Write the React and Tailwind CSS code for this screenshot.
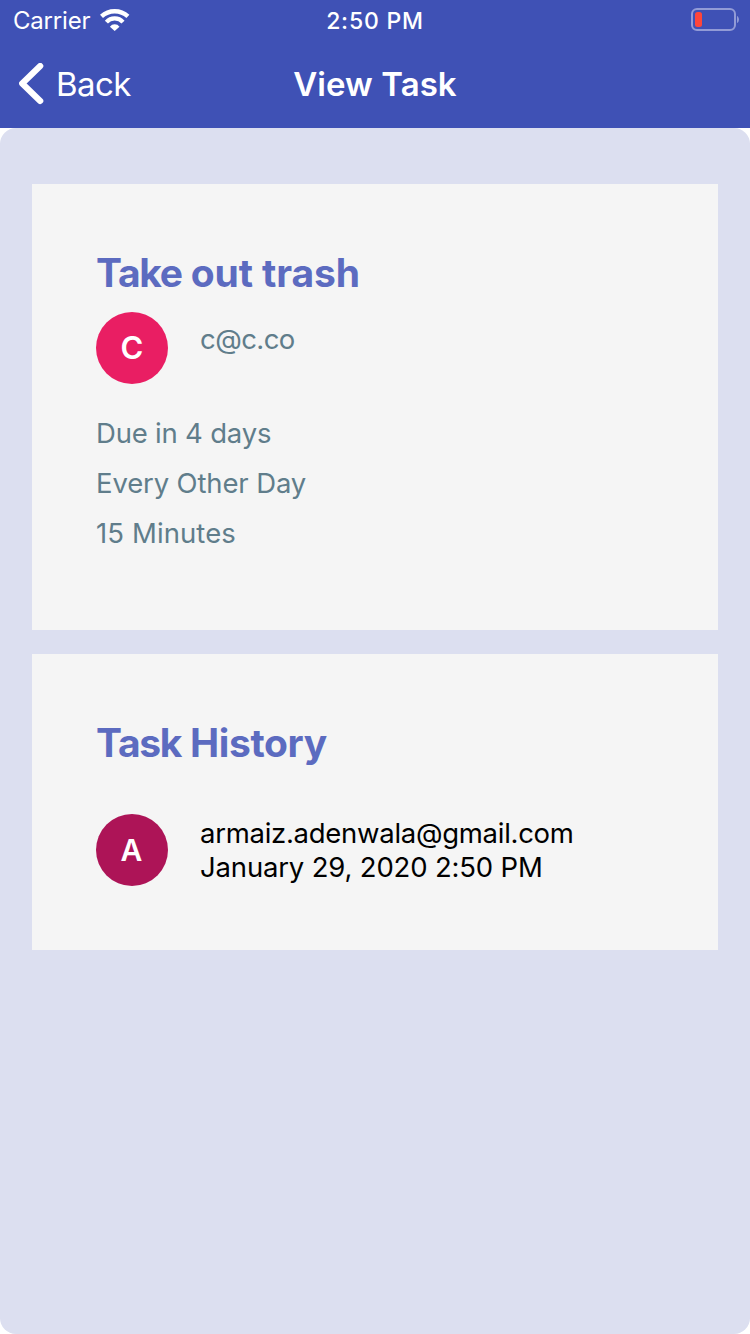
function WifiIcon() {
  return (
    <svg className="ml-[10px] mt-[9px] h-[22px] w-[30px] shrink-0" viewBox="0 0 30 22" fill="none">
      <path d="M1.5 7.4 A19.4 19.4 0 0 1 27.9 7.4" stroke="#fff" strokeWidth="4.4" />
      <path d="M6.4 13.1 A11.2 11.2 0 0 1 23 13.1" stroke="#fff" strokeWidth="4.2" />
      <path d="M9.9 17.8 A5.9 5.9 0 0 1 19.5 17.8 L14.7 22 Z" fill="#fff" />
    </svg>
  );
}

function BatteryIcon() {
  return (
    <svg className="mt-[8px] h-[23px] w-[48px]" viewBox="0 0 48 23" fill="none">
      <rect x="1" y="1" width="43" height="21" rx="5" stroke="#929bd6" strokeWidth="2" />
      <rect x="4" y="4" width="7" height="15" rx="2.5" fill="#ff453a" />
      <path d="M46 8 C48.6 9 48.6 14 46 15 Z" fill="#929bd6" />
    </svg>
  );
}

function StatusBar() {
  return (
    <div className="grid h-10 grid-cols-3">
      <div className="flex pl-[13px]">
        <span className="text-[24px] leading-[42px] tracking-[-0.2px]">Carrier</span>
        <WifiIcon />
      </div>
      <div className="text-center text-[23px] leading-[42px] font-medium tracking-[0.8px]">2:50 PM</div>
      <div className="flex justify-end pr-[11px]">
        <BatteryIcon />
      </div>
    </div>
  );
}

function NavBar() {
  return (
    <div className="grid h-[88px] grid-cols-3">
      <div className="flex pl-[19px]">
        <svg className="mt-[23px] h-[42px] w-[25px] shrink-0" viewBox="0 0 25 42" fill="none">
          <path d="M21.2 3.1 L3.2 20.5 L21.2 37.9" stroke="#fff" strokeWidth="6.2" strokeLinecap="round" strokeLinejoin="round" />
        </svg>
        <span className="ml-[12px] text-[33px] leading-[88px] tracking-[-0.6px]">Back</span>
      </div>
      <div className="text-center text-[33px] leading-[88px] font-semibold tracking-[0.05px] whitespace-nowrap">View Task</div>
    </div>
  );
}

export default function App() {
  return (
    <div className="flex h-[1334px] w-[750px] flex-col bg-white font-['Inter',sans-serif]">
      <header className="h-32 shrink-0 bg-[#3f51b5] text-white">
        <StatusBar />
        <NavBar />
      </header>
      <main className="flex flex-1 flex-col gap-6 rounded-2xl bg-[#dcdff0] px-8 pt-14">
        <section className="h-[446px] bg-[#f5f5f5] px-16 pt-16">
          <h1 className="text-[39px] leading-[50px] font-bold tracking-[-0.1px] text-[#5c6bc0]">
            <span className="tracking-[-1.3px]">Take</span> out trash
          </h1>
          <div className="mt-[14px] flex gap-8">
            <div className="flex size-[72px] items-center justify-center rounded-full bg-[#e91e63] text-[31px] font-semibold text-white">C</div>
            <span className="mt-[10px] text-[27.5px] leading-[34px] tracking-[-0.55px] text-[#607d8b]">c@c.co</span>
          </div>
          <div className="mt-6 text-[27.5px] leading-[50px] text-[#607d8b]">
            <p><span className="tracking-[-0.2px]">Due in 4 days</span></p>
            <p><span className="tracking-[-0.14px]">Every Other Day</span></p>
            <p><span className="tracking-[0.1px]">15 Minutes</span></p>
          </div>
        </section>
        <section className="h-[296px] bg-[#f5f5f5] px-16 pt-16">
          <h2 className="text-[39px] leading-[50px] font-bold tracking-[-0.35px] text-[#5c6bc0]">
            <span className="tracking-[-1.3px]">Task</span> History
          </h2>
          <div className="mt-[46px] flex gap-8">
            <div className="flex size-[72px] items-center justify-center rounded-full bg-[#ad1457] pr-px text-[30px] font-semibold text-white">A</div>
            <div className="mt-[2px] text-[27.5px] leading-[34px] text-black">
              <p><span className="tracking-[-0.28px]">armaiz.adenwala@gmail.com</span></p>
              <p><span className="tracking-[-0.17px]">January 29, 2020 2:50 PM</span></p>
            </div>
          </div>
        </section>
      </main>
    </div>
  );
}
